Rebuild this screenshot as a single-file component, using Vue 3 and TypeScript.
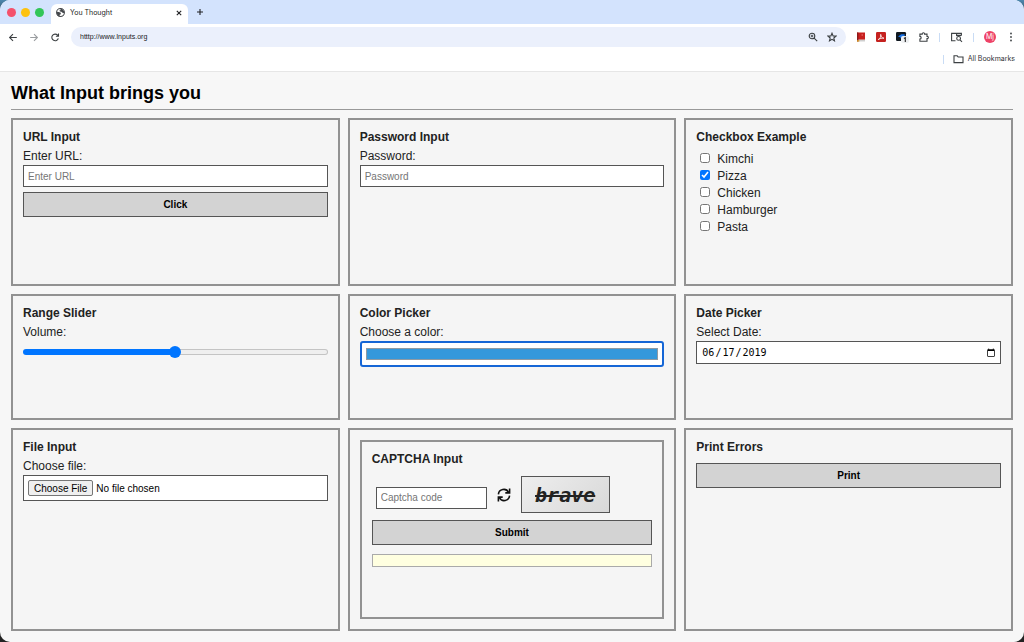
<script setup lang="ts">
import { ref } from 'vue'

const foods = ['Kimchi', 'Pizza', 'Chicken', 'Hamburger', 'Pasta']
const picked = ref<string[]>(['Pizza'])
const volume = ref(50)
const color = ref('#3498db')
const date = ref('2019-06-17')
const address = ref('htttp://www.Inputs.org')
</script>

<template>
  <div class="desktop">
    <div class="window">
      <header class="tabbar">
        <div class="lights">
          <button class="light red" aria-label="Close window"></button>
          <button class="light yellow" aria-label="Minimize window"></button>
          <button class="light green" aria-label="Zoom window"></button>
        </div>
        <div class="tab">
          <svg class="globe" viewBox="0 0 16 16" aria-hidden="true">
            <circle cx="8" cy="8" r="7" fill="#fff" stroke="#45484c" stroke-width="1.8" />
            <path d="M1.5 6.5 L5 7 L8.5 8.5 L8.5 11 L6.5 12 L6.5 15 C3 14 1 11 1.5 6.5Z M7 1 L11.5 2 L14.5 6 L14.5 9.5 L11.5 8.5 L9.5 6.5 L7 6 L6 4.5 L8.5 3.5Z" fill="#45484c" />
          </svg>
          <span class="tab-title">You Thought</span>
          <button class="icon-btn close" aria-label="Close tab">
            <svg viewBox="0 0 8 8"><path d="M1.8 1.8 L6.2 6.2 M6.2 1.8 L1.8 6.2" /></svg>
          </button>
        </div>
        <button class="icon-btn plus" aria-label="New tab">
          <svg viewBox="0 0 8 8"><path d="M4 1 V7 M1 4 H7" /></svg>
        </button>
      </header>

      <nav class="toolbar" aria-label="Browser toolbar">
        <div class="nav-buttons">
          <button class="icon-btn" aria-label="Back">
            <svg viewBox="0 0 10 10"><path d="M8.8 5.5 H1.8 M5 2.1 L1.6 5.5 L5 8.9" /></svg>
          </button>
          <button class="icon-btn dim" aria-label="Forward">
            <svg viewBox="0 0 10 10"><path d="M1.2 5.5 H8.2 M5 2.1 L8.4 5.5 L5 8.9" /></svg>
          </button>
          <button class="icon-btn" aria-label="Reload">
            <svg viewBox="0 0 10 10"><path d="M8.3 6.3 A3.3 3.3 0 1 1 7.6 3.2 L8.3 4 M8.5 1.6 V4.2 H5.9" /></svg>
          </button>
        </div>
        <div class="address">
          <input v-model="address" aria-label="Address" type="text" />
          <button class="icon-btn" aria-label="Zoom level">
            <svg viewBox="0 0 10 10"><circle cx="4" cy="4" r="2.8" /><path d="M6.1 6.1 L9.2 9.2 M2.7 4 H5.3 M4 2.7 V5.3" /></svg>
          </button>
          <button class="icon-btn" aria-label="Bookmark this page">
            <svg viewBox="0 0 10 10"><path d="M5 1.2 L6.1 3.9 L9 4.1 L6.8 6 L7.5 8.8 L5 7.3 L2.5 8.8 L3.2 6 L1 4.1 L3.9 3.9Z" /></svg>
          </button>
        </div>
        <div class="extensions">
          <button class="icon-btn" aria-label="Dictionary">
            <svg class="art" viewBox="0 0 10 10">
              <path d="M1 0.5 H9 V7.8 H1Z" fill="#c8201f" /><path d="M1 7.8 H9 V9.5 H1Z" fill="#cfcfcf" />
              <path d="M1 0.5 H2.4 V9.5 H1Z" fill="#8b1a1a" /><path d="M1 8.2 H3.4 V9.5 H1Z" fill="#e0a020" /><path d="M5.5 2.5 h1.5 v1 h-1.5z" fill="#f08080" />
            </svg>
          </button>
          <button class="icon-btn" aria-label="PDF tools">
            <svg class="art" viewBox="0 0 10 10">
              <rect width="10" height="10" rx="1.2" fill="#c5221f" />
              <path d="M2.2 7.6 C4.2 6.6 5.2 4.6 4.7 2.4 C4.7 4.6 6 6.2 8 6.2 C6 5.9 3.8 6.5 2.2 7.6Z" fill="none" stroke="#fff" stroke-width=".8" />
            </svg>
          </button>
          <button class="icon-btn" aria-label="Page notes">
            <svg class="art wide" viewBox="0 0 13 12">
              <rect x="0" y="1" width="10" height="9" rx="1.2" fill="#111820" />
              <path d="M2 5.5 L5.2 3.2 L8.6 3.2 L8.6 5 L5 7.8 L4.2 6.2Z" fill="#1a73e8" />
              <rect x="5" y="5" width="8" height="7" rx="2" fill="#eef0f2" />
              <path d="M7.9 7.4 L9.3 6.6 V11" fill="none" stroke="#222" stroke-width="1.1" />
            </svg>
          </button>
          <button class="icon-btn" aria-label="Extensions">
            <svg viewBox="0 0 10 10"><path d="M0.9 2.1 H3.2 C3 0.3 5.8 0.3 5.6 2.1 H8 V4.4 C9.8 4.2 9.8 6.8 8 6.6 V9.2 H0.9 V7 C2.6 7 2.6 4.4 0.9 4.4Z" /></svg>
          </button>
          <i class="divider"></i>
          <button class="icon-btn" aria-label="Search tabs">
            <svg class="wide" viewBox="0 0 13 12"><path d="M5.5 9.8 H1.6 V2.4 H11.4 V4.6 M6.6 2.6 V4.4 H11.4" /><circle cx="8.6" cy="7.4" r="1.9" /><path d="M10 8.8 L12 10.8" /></svg>
          </button>
          <i class="divider"></i>
          <button class="avatar" aria-label="Profile">Mj</button>
          <button class="icon-btn" aria-label="Menu">
            <svg class="dots" viewBox="0 0 10 10"><circle cx="5" cy="1.5" r=".9" /><circle cx="5" cy="5" r=".9" /><circle cx="5" cy="8.5" r=".9" /></svg>
          </button>
        </div>
      </nav>

      <div class="bookmarks">
        <i class="divider"></i>
        <button class="all">
          <svg viewBox="0 0 11 10"><path d="M1 1.8 H4.2 L5.2 3 H10 V8.6 H1Z" /></svg>
          All Bookmarks
        </button>
      </div>

      <main class="page">
        <h1>What Input brings you</h1>
        <div class="grid">
          <section class="card">
            <h2>URL Input</h2>
            <label for="url">Enter URL:</label>
            <input id="url" class="field" type="url" placeholder="Enter URL" />
            <button class="action">Click</button>
          </section>

          <section class="card">
            <h2>Password Input</h2>
            <label for="password">Password:</label>
            <input id="password" class="field" type="password" placeholder="Password" />
          </section>

          <section class="card">
            <h2>Checkbox Example</h2>
            <div class="checks">
              <label v-for="food in foods" :key="food">
                <input v-model="picked" type="checkbox" :value="food" />
                <span>{{ food }}</span>
              </label>
            </div>
          </section>

          <section class="card">
            <h2>Range Slider</h2>
            <label for="volume">Volume:</label>
            <input id="volume" v-model="volume" class="slider" type="range" min="0" max="100" :style="{ '--fill': volume + '%' }" />
          </section>

          <section class="card">
            <h2>Color Picker</h2>
            <label for="color">Choose a color:</label>
            <input id="color" v-model="color" class="swatch" type="color" />
          </section>

          <section class="card">
            <h2>Date Picker</h2>
            <label for="date">Select Date:</label>
            <input id="date" v-model="date" class="field date" type="date" />
          </section>

          <section class="card">
            <h2>File Input</h2>
            <label for="file">Choose file:</label>
            <input id="file" class="field file" type="file" />
          </section>

          <section class="card">
            <form class="card captcha" @submit.prevent>
              <h2>CAPTCHA Input</h2>
              <div class="captcha-row">
                <input class="field code" type="text" placeholder="Captcha code" aria-label="Captcha code" />
                <button class="refresh" type="button" aria-label="New code">
                  <svg viewBox="0 0 14 14">
                    <path d="M1.4 6.4 A5.4 5.4 0 0 1 11.6 4.4 M12.6 7.6 A5.4 5.4 0 0 1 2.4 9.6" />
                    <path d="M12.6 0.6 V4.9 H8.3 M1.4 13.4 V9.1 H5.7" />
                  </svg>
                </button>
                <div class="word"><span>brave</span></div>
              </div>
              <button class="action" type="submit">Submit</button>
              <output class="notice"></output>
            </form>
          </section>

          <section class="card">
            <h2>Print Errors</h2>
            <button class="action first">Print</button>
          </section>
        </div>
      </main>
    </div>
  </div>
</template>

<style>
body {
  margin: 0;
}
</style>

<style scoped>
* {
  box-sizing: border-box;
}
.desktop {
  min-height: 100vh;
  display: flex;
  background: linear-gradient(to bottom, #4d87ae 0, #222 24px);
  font-family: 'Liberation Sans', Arial, sans-serif;
  color: #222;
}
.window {
  flex: 1;
  display: flex;
  flex-direction: column;
  border-radius: 10px;
  overflow: hidden;
  background: #f7f7f7;
}
button {
  font-family: inherit;
  padding: 0;
  border: 0;
  background: none;
}
svg {
  display: block;
  width: 10px;
  height: 10px;
  fill: none;
  stroke: #3c4043;
  stroke-width: 1.1;
}
.icon-btn {
  display: grid;
  place-items: center;
}
.tabbar {
  height: 24px;
  display: flex;
  align-items: center;
  background: #d3e3fd;
}
.lights {
  display: flex;
  gap: 5px;
  padding: 0 7px;
}
.light {
  width: 9px;
  height: 9px;
  border-radius: 50%;
}
.red { background: #f4516c; }
.yellow { background: #fdc20f; }
.green { background: #33c658; }
.tab {
  width: 137px;
  height: 20px;
  align-self: flex-end;
  display: flex;
  align-items: center;
  padding: 0 5px 3px;
  border-radius: 6px 6px 0 0;
  background: #fff;
}
.globe {
  width: 9px;
  height: 9px;
  stroke: none;
}
.tab-title {
  flex: 1;
  margin-left: 5px;
  font: 7px/12px Inter, sans-serif;
}
.close svg,
.plus svg {
  width: 8px;
  height: 8px;
  stroke: #202124;
}
.plus {
  margin-left: 8px;
}
.toolbar {
  height: 26px;
  display: flex;
  align-items: center;
  background: #fff;
}
.nav-buttons {
  display: flex;
  gap: 11px;
  padding: 0 11px 0 8px;
}
.dim svg {
  stroke: #9a9da0;
}
.address {
  flex: 1;
  height: 20px;
  display: flex;
  align-items: center;
  gap: 9px;
  padding: 0 9px;
  border-radius: 10px;
  background: #ebf0fc;
}
.address input {
  flex: 1;
  min-width: 0;
  padding: 0;
  border: 0;
  background: none;
  color: #202124;
  font: 7px/12px 'Liberation Sans', Arial, sans-serif;
}
.extensions {
  display: flex;
  align-items: center;
  gap: 10px;
  padding: 0 8px 0 10px;
}
.art {
  stroke: none;
}
svg.wide {
  width: 13px;
  height: 12px;
}
.dots {
  fill: #3c4043;
  stroke: none;
}
.divider {
  width: 1px;
  height: 9px;
  background: #c9dcf5;
}
.avatar {
  width: 12px;
  height: 12px;
  border-radius: 50%;
  background: #ee4266;
  color: #fff;
  font: 7px/12px Inter, sans-serif;
}
.bookmarks {
  height: 22px;
  display: flex;
  align-items: center;
  justify-content: flex-end;
  gap: 9px;
  padding: 0 9px 3px 0;
  border-bottom: 1px solid #e6e6e6;
  background: #fff;
}
.all {
  display: flex;
  align-items: center;
  gap: 4px;
  color: #303236;
  font: 7px/12px Inter, sans-serif;
}
.all svg {
  width: 11px;
}
.page {
  flex: 1;
  display: flex;
  flex-direction: column;
  padding: 10px 11px 11px;
}
h1 {
  margin: 0 0 8px;
  padding-bottom: 5px;
  border-bottom: 1px solid #999;
  color: #000;
  font-size: 18px;
  line-height: 22px;
}
.grid {
  flex: 1;
  display: grid;
  grid-template-columns: repeat(3, minmax(0, 1fr));
  grid-template-rows: 168fr 126fr 203fr;
  gap: 8px;
}
.card {
  display: flex;
  flex-direction: column;
  padding: 10px;
  border: 2px solid #929292;
  background: #f5f5f5;
}
h2 {
  margin: 0;
  font-size: 12px;
  line-height: 14px;
}
label {
  margin-top: 5px;
  font-size: 12px;
  line-height: 14px;
}
.field {
  width: 100%;
  height: 22px;
  margin: 2px 0 0;
  padding: 0 4px;
  border: 1px solid #555;
  border-radius: 0;
  background: #fff;
  color: #000;
  font-family: inherit;
  font-size: 10px;
}
.field::placeholder {
  color: #757575;
}
.action {
  height: 25px;
  margin-top: 5px;
  border: 1px solid #555;
  background: #d3d3d3;
  color: #000;
  font-size: 10px;
  font-weight: bold;
}
.first {
  margin-top: 9px;
}
.checks {
  display: flex;
  flex-direction: column;
  padding: 7px 0 0 4px;
}
.checks label {
  display: flex;
  gap: 7px;
  margin: 0;
  line-height: 17px;
}
.checks input {
  width: 10px;
  height: 10px;
  margin: 2px 0 0;
  accent-color: #0075ff;
}
.slider {
  appearance: none;
  width: 100%;
  height: 12px;
  margin: 7px 0 0;
  background: none;
}
.slider::-webkit-slider-runnable-track {
  height: 6px;
  border: 1px solid transparent;
  border-radius: 3px;
  background:
    linear-gradient(#0075ff, #0075ff) 0 / var(--fill) 100% no-repeat border-box,
    linear-gradient(#efefef, #efefef) padding-box,
    linear-gradient(#c4c4c4, #c4c4c4) border-box;
}
.slider::-webkit-slider-thumb {
  appearance: none;
  width: 12px;
  height: 12px;
  margin-top: -4px;
  border-radius: 50%;
  background: #0075ff;
}
.swatch {
  appearance: none;
  width: 100%;
  height: 26px;
  margin: 2px 0 0;
  padding: 5px 4px;
  border: 2px solid #1566d6;
  border-radius: 3px;
  background: #fff;
}
.swatch::-webkit-color-swatch-wrapper {
  padding: 0;
}
.swatch::-webkit-color-swatch {
  border: 1px solid #8f9aa3;
  border-radius: 0;
}
.date {
  height: 23px;
  font-family: 'DejaVu Sans Mono', monospace;
}
.date::-webkit-calendar-picker-indicator {
  width: 10px;
  height: 10px;
  padding: 0;
}
.file {
  height: 26px;
  padding: 4px;
}
.file::file-selector-button {
  height: 16px;
  margin-right: 3px;
  padding: 0 5px;
  border: 1px solid #767676;
  border-radius: 2px;
  background: #efefef;
  font: inherit;
}
.captcha {
  flex: 1;
}
.captcha-row {
  display: flex;
  align-items: center;
  gap: 10px;
  margin: 10px 0 2px 4px;
}
.code {
  width: 111px;
  margin-top: 6px;
}
.refresh svg {
  width: 14px;
  height: 14px;
  stroke: #111;
  stroke-width: 1.6;
}
.word {
  width: 89px;
  height: 37px;
  display: grid;
  place-items: center;
  border: 1px solid #555;
  background: linear-gradient(135deg, #eee, #d8d8d8);
}
.word span {
  color: #222;
  font: italic bold 20px/24px 'DejaVu Sans Mono', monospace;
  text-decoration: line-through;
}
.notice {
  height: 13px;
  margin-top: 9px;
  border: 1px solid #aaa;
  background: #ffffe0;
}
</style>
